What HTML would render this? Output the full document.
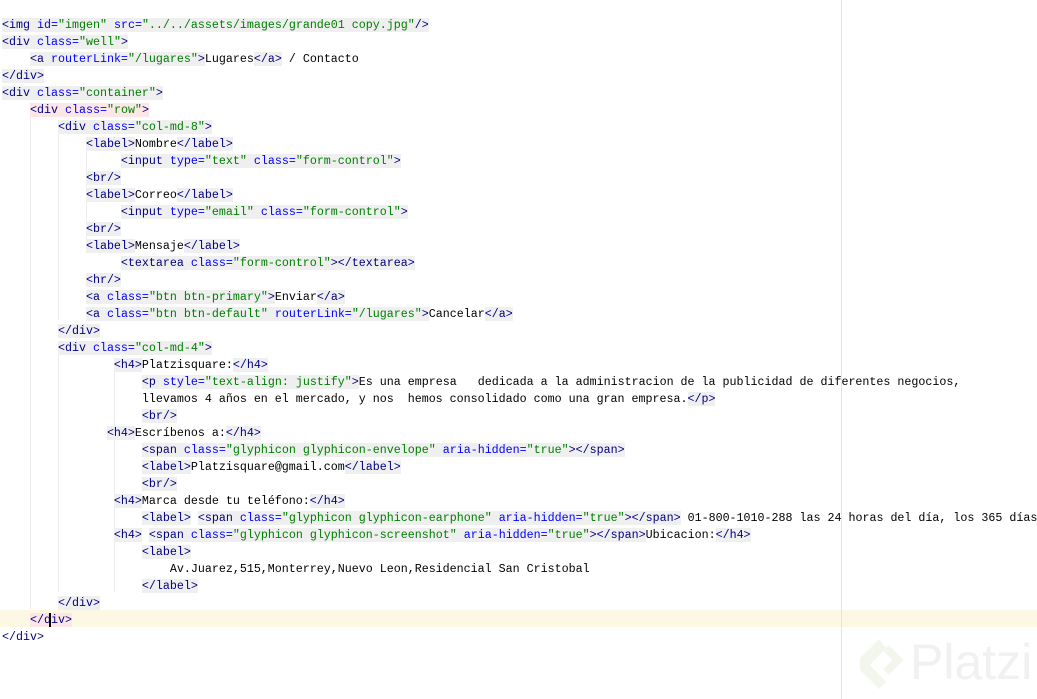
<!DOCTYPE html>
<html><head><meta charset="utf-8"><style>
html,body{margin:0;padding:0;background:#fff;width:1037px;height:699px;overflow:hidden;position:relative}
.code{position:absolute;left:2px;top:17px;font-family:"Liberation Mono",monospace;font-size:11.67px;line-height:17px;white-space:pre;color:#000;z-index:2}
.g{background:#efefef}
.t{color:#000080}
.a{color:#0000ff}
.v{color:#008000}
.p{background:#fde6e6}
.cur{position:absolute;left:0;top:610px;width:1037px;height:17px;background:#fdf8e4;z-index:0}
.mar{position:absolute;left:841px;top:0;width:1px;height:699px;background:#e4e4e4;z-index:1}
.gd{position:absolute;width:1px;background:#ececec;z-index:1}
.wm{position:absolute;left:910px;top:633px;font-family:"Liberation Sans",sans-serif;font-size:50px;color:#f1f1f1;z-index:1}
</style></head><body>
<div class="cur"></div>
<div class="mar"></div>
<div class="gd" style="left:30px;top:117px;height:492px"></div>
<div class="gd" style="left:58px;top:134px;height:186px"></div>
<div class="gd" style="left:58px;top:355px;height:237px"></div>
<div class="gd" style="left:86px;top:151px;height:100px"></div>
<div class="gd" style="left:114px;top:372px;height:220px"></div>
<svg style="position:absolute;left:852px;top:635px;z-index:1" width="55" height="58" viewBox="0 0 55 58"><path d="M27 4 L8 23 L8 35 L27 54 L34 47 L18 30 L34 13 Z" fill="#f3f6ec"/><path d="M34 13 L46 25 L34 37" fill="none" stroke="#f3f6ec" stroke-width="8"/></svg>
<div class="wm">Platzi</div>
<div class="code"><span class="g"><span class="t">&lt;img </span><span class="a">id=</span><span class="v">"imgen" </span><span class="a">src=</span><span class="v">"../../assets/images/grande01 copy.jpg"</span><span class="t">/&gt;</span></span>
<span class="g"><span class="t">&lt;div </span><span class="a">class=</span><span class="v">"well"</span><span class="t">&gt;</span></span>
    <span class="g"><span class="t">&lt;a </span><span class="a">routerLink=</span><span class="v">"/lugares"</span><span class="t">&gt;</span></span>Lugares<span class="g"><span class="t">&lt;/a&gt;</span></span> / Contacto
<span class="g"><span class="t">&lt;/div&gt;</span></span>
<span class="g"><span class="t">&lt;div </span><span class="a">class=</span><span class="v">"container"</span><span class="t">&gt;</span></span>
    <span class="p"><span class="t">&lt;div </span><span class="a">class=</span><span class="v">"row"</span><span class="t">&gt;</span></span>
        <span class="g"><span class="t">&lt;div </span><span class="a">class=</span><span class="v">"col-md-8"</span><span class="t">&gt;</span></span>
            <span class="g"><span class="t">&lt;label&gt;</span></span>Nombre<span class="g"><span class="t">&lt;/label&gt;</span></span>
                 <span class="g"><span class="t">&lt;input </span><span class="a">type=</span><span class="v">"text" </span><span class="a">class=</span><span class="v">"form-control"</span><span class="t">&gt;</span></span>
            <span class="g"><span class="t">&lt;br/&gt;</span></span>
            <span class="g"><span class="t">&lt;label&gt;</span></span>Correo<span class="g"><span class="t">&lt;/label&gt;</span></span>
                 <span class="g"><span class="t">&lt;input </span><span class="a">type=</span><span class="v">"email" </span><span class="a">class=</span><span class="v">"form-control"</span><span class="t">&gt;</span></span>
            <span class="g"><span class="t">&lt;br/&gt;</span></span>
            <span class="g"><span class="t">&lt;label&gt;</span></span>Mensaje<span class="g"><span class="t">&lt;/label&gt;</span></span>
                 <span class="g"><span class="t">&lt;textarea </span><span class="a">class=</span><span class="v">"form-control"</span><span class="t">&gt;&lt;/textarea&gt;</span></span>
            <span class="g"><span class="t">&lt;hr/&gt;</span></span>
            <span class="g"><span class="t">&lt;a </span><span class="a">class=</span><span class="v">"btn btn-primary"</span><span class="t">&gt;</span></span>Enviar<span class="g"><span class="t">&lt;/a&gt;</span></span>
            <span class="g"><span class="t">&lt;a </span><span class="a">class=</span><span class="v">"btn btn-default" </span><span class="a">routerLink=</span><span class="v">"/lugares"</span><span class="t">&gt;</span></span>Cancelar<span class="g"><span class="t">&lt;/a&gt;</span></span>
        <span class="g"><span class="t">&lt;/div&gt;</span></span>
        <span class="g"><span class="t">&lt;div </span><span class="a">class=</span><span class="v">"col-md-4"</span><span class="t">&gt;</span></span>
                <span class="g"><span class="t">&lt;h4&gt;</span></span>Platzisquare:<span class="g"><span class="t">&lt;/h4&gt;</span></span>
                    <span class="g"><span class="t">&lt;p </span><span class="a">style=</span><span class="v">"text-align: justify"</span><span class="t">&gt;</span></span>Es una empresa   dedicada a la administracion de la publicidad de diferentes negocios,
                    llevamos 4 años en el mercado, y nos  hemos consolidado como una gran empresa.<span class="g"><span class="t">&lt;/p&gt;</span></span>
                    <span class="g"><span class="t">&lt;br/&gt;</span></span>
               <span class="g"><span class="t">&lt;h4&gt;</span></span>Escríbenos a:<span class="g"><span class="t">&lt;/h4&gt;</span></span>
                    <span class="g"><span class="t">&lt;span </span><span class="a">class=</span><span class="v">"glyphicon glyphicon-envelope" </span><span class="a">aria-hidden=</span><span class="v">"true"</span><span class="t">&gt;&lt;/span&gt;</span></span>
                    <span class="g"><span class="t">&lt;label&gt;</span></span>Platzisquare@gmail.com<span class="g"><span class="t">&lt;/label&gt;</span></span>
                    <span class="g"><span class="t">&lt;br/&gt;</span></span>
                <span class="g"><span class="t">&lt;h4&gt;</span></span>Marca desde tu teléfono:<span class="g"><span class="t">&lt;/h4&gt;</span></span>
                    <span class="g"><span class="t">&lt;label&gt;</span></span> <span class="g"><span class="t">&lt;span </span><span class="a">class=</span><span class="v">"glyphicon glyphicon-earphone" </span><span class="a">aria-hidden=</span><span class="v">"true"</span><span class="t">&gt;&lt;/span&gt;</span></span> 01-800-1010-288 las 24 horas del día, los 365 días
                <span class="g"><span class="t">&lt;h4&gt;</span></span> <span class="g"><span class="t">&lt;span </span><span class="a">class=</span><span class="v">"glyphicon glyphicon-screenshot" </span><span class="a">aria-hidden=</span><span class="v">"true"</span><span class="t">&gt;&lt;/span&gt;</span></span>Ubicacion:<span class="g"><span class="t">&lt;/h4&gt;</span></span>
                    <span class="g"><span class="t">&lt;label&gt;</span></span>
                        Av.Juarez,515,Monterrey,Nuevo Leon,Residencial San Cristobal
                    <span class="g"><span class="t">&lt;/label&gt;</span></span>
        <span class="g"><span class="t">&lt;/div&gt;</span></span>
    <span class="p"><span class="t">&lt;/d</span></span><span style="border-left:2px solid #000;margin-left:-2px"></span><span class="p"><span class="t">iv&gt;</span></span>
<span class="t">&lt;/div&gt;</span></div>
</body></html>
